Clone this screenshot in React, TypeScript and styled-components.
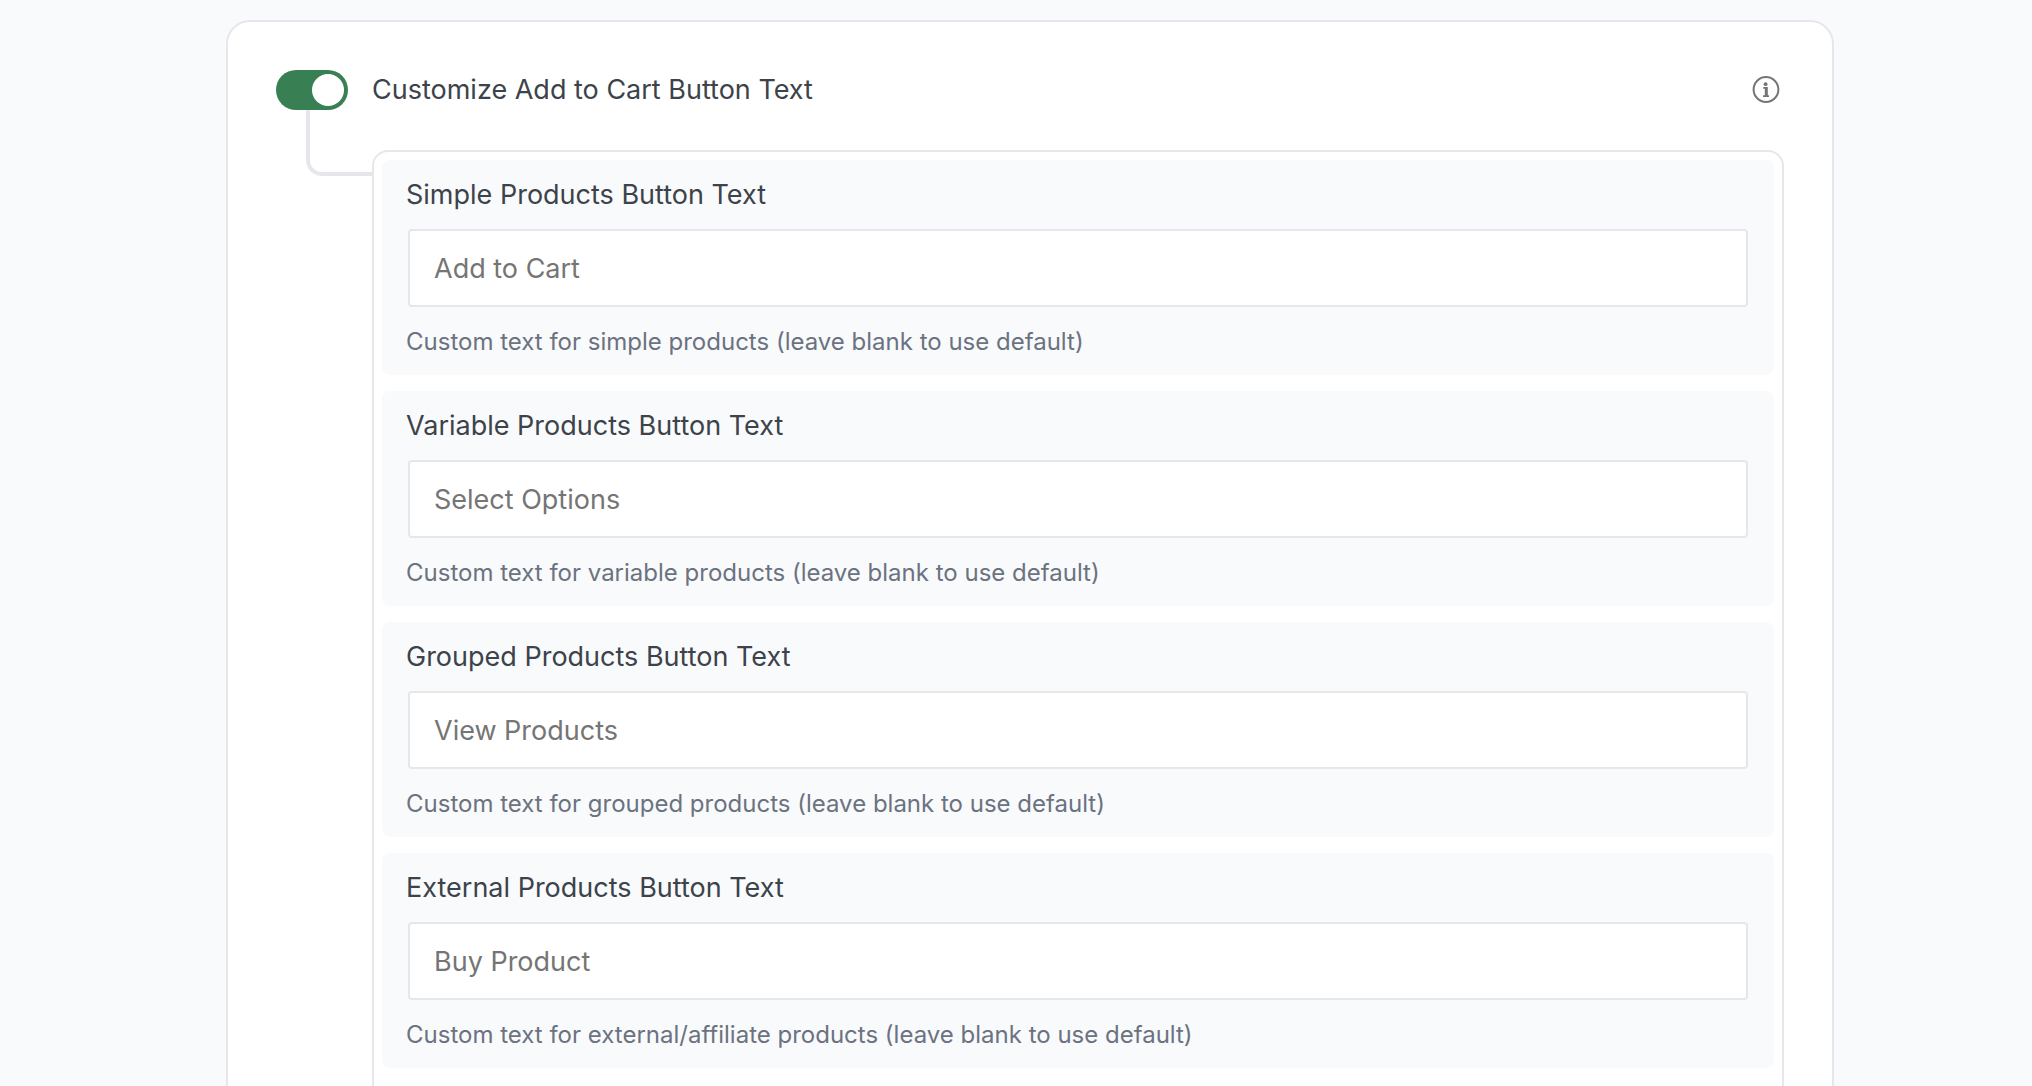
import React, { useId, useState } from "react";
import styled, { createGlobalStyle } from "styled-components";

const colors = {
  page: "#f9fafc",
  surface: "#ffffff",
  border: "#e5e7eb",
  text: "#3c434a",
  help: "#6b7280",
  placeholder: "#757575",
  accent: "#388053",
};

const GlobalStyle = createGlobalStyle`
  *, *::before, *::after {
    box-sizing: border-box;
  }

  body {
    margin: 0;
    background: ${colors.page};
    color: ${colors.text};
    font-family: Inter, "Liberation Sans", sans-serif;
    font-size: 27px;
    line-height: 40px;
  }
`;

const Page = styled.main`
  padding: 20px 198px 0 226px;
  height: 100vh;
  overflow: hidden;
`;

const Card = styled.section`
  padding: 48px;
  border: 2px solid ${colors.border};
  border-radius: 24px;
  background: ${colors.surface};
`;

const Header = styled.header`
  display: flex;
  align-items: center;
  gap: 24px;
`;

const Switch = styled.input`
  appearance: none;
  flex: none;
  display: flex;
  width: 72px;
  height: 40px;
  margin: 0;
  padding: 4px;
  border-radius: 20px;
  background: #9ca3af;
  cursor: pointer;

  &::before {
    content: "";
    width: 32px;
    height: 32px;
    border-radius: 50%;
    background: ${colors.surface};
  }

  &:checked {
    justify-content: flex-end;
    background: ${colors.accent};
  }
`;

const SwitchLabel = styled.label`
  flex: 1;
  cursor: pointer;
`;

const InfoButton = styled.button`
  display: flex;
  padding: 0;
  margin-right: 4px;
  border: 0;
  background: none;
  color: ${colors.placeholder};
  cursor: pointer;
`;

const Nested = styled.div`
  display: flex;
  align-items: flex-start;
  padding-left: 30px;
`;

const Connector = styled.div`
  flex: none;
  width: 66px;
  height: 66px;
  border: solid ${colors.border};
  border-width: 0 0 4px 4px;
  border-bottom-left-radius: 16px;
`;

const Panel = styled.div`
  flex: 1;
  display: flex;
  flex-direction: column;
  gap: 16px;
  margin-top: 40px;
  padding: 8px 8px 48px;
  border: 2px solid ${colors.border};
  border-radius: 16px;
`;

const Field = styled.div`
  display: flex;
  flex-direction: column;
  padding: 15px 24px 13px;
  border-radius: 8px;
  background: ${colors.page};
`;

const FieldLabel = styled.label`
  margin-bottom: 14px;
`;

const TextInput = styled.input`
  height: 78px;
  margin: 0 2px;
  padding: 0 24px;
  border: 2px solid ${colors.border};
  border-radius: 4px;
  background: ${colors.surface};
  color: ${colors.text};
  font: inherit;

  &::placeholder {
    color: ${colors.placeholder};
    opacity: 1;
  }
`;

const Help = styled.p`
  margin: 15px 0 0;
  color: ${colors.help};
  font-size: 24px;
`;

const fields = [
  { label: "Simple Products Button Text", placeholder: "Add to Cart", kind: "simple" },
  { label: "Variable Products Button Text", placeholder: "Select Options", kind: "variable" },
  { label: "Grouped Products Button Text", placeholder: "View Products", kind: "grouped" },
  { label: "External Products Button Text", placeholder: "Buy Product", kind: "external/affiliate" },
];

function InfoIcon() {
  return (
    <svg width="28" height="28" viewBox="0 0 28 28" fill="none" aria-hidden="true">
      <circle cx="14" cy="13.5" r="12.4" stroke="currentColor" strokeWidth="2" />
      <circle cx="13.6" cy="8.2" r="1.9" fill="currentColor" />
      <path d="M11.2 11H15.8V19.2H17V21H11V19.2H12.8V12.8H11.2Z" fill="currentColor" />
    </svg>
  );
}

function TextField({ label, placeholder, kind }: (typeof fields)[number]) {
  const id = useId();
  return (
    <Field>
      <FieldLabel htmlFor={id}>{label}</FieldLabel>
      <TextInput id={id} type="text" placeholder={placeholder} aria-describedby={`${id}-help`} />
      <Help id={`${id}-help`}>{`Custom text for ${kind} products (leave blank to use default)`}</Help>
    </Field>
  );
}

export default function App() {
  const [enabled, setEnabled] = useState(true);
  return (
    <>
      <GlobalStyle />
      <Page>
        <Card>
          <Header>
            <Switch
              id="customize"
              type="checkbox"
              role="switch"
              checked={enabled}
              onChange={(event) => setEnabled(event.target.checked)}
            />
            <SwitchLabel htmlFor="customize">Customize Add to Cart Button Text</SwitchLabel>
            <InfoButton type="button" aria-label="More information">
              <InfoIcon />
            </InfoButton>
          </Header>
          {enabled && (
            <Nested>
              <Connector />
              <Panel>
                {fields.map((field) => (
                  <TextField key={field.kind} {...field} />
                ))}
              </Panel>
            </Nested>
          )}
        </Card>
      </Page>
    </>
  );
}
